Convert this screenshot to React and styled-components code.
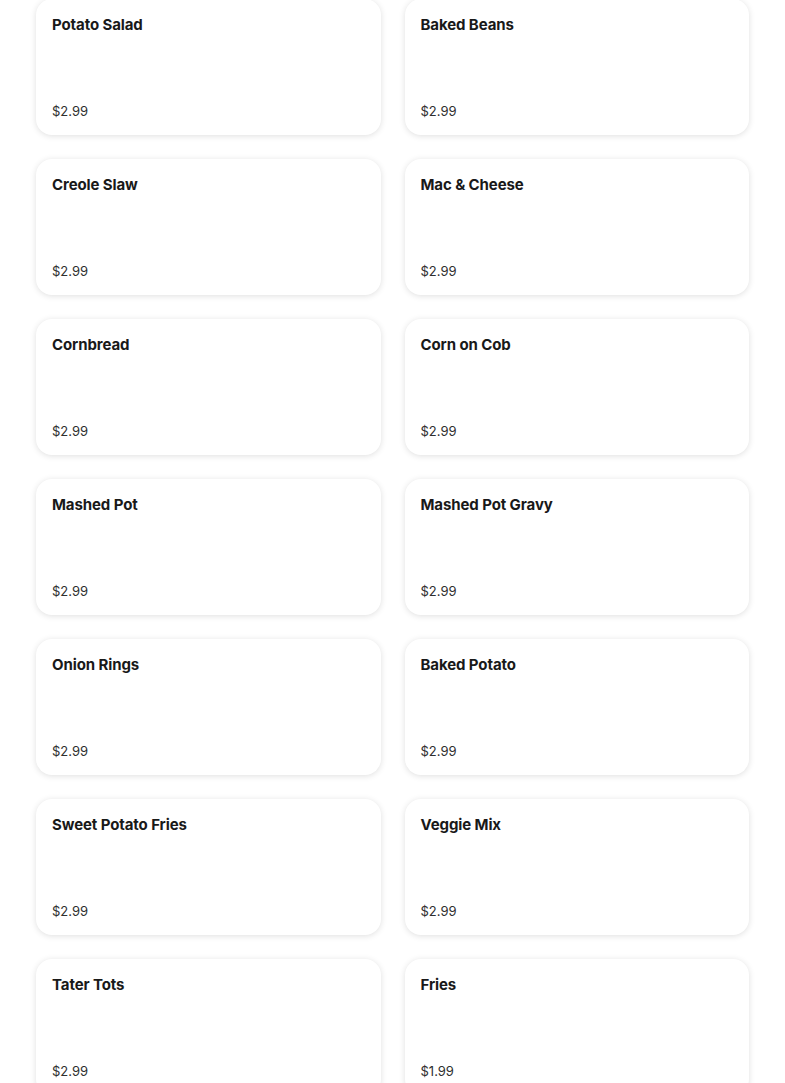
import styled, { createGlobalStyle } from "styled-components";

const GlobalStyle = createGlobalStyle`
    html, body {
        margin: 0;
        padding: 0;
        background: #ffffff;
    }
    body {
        font-family: Inter, "Noto Sans", "Liberation Sans", sans-serif;
        -webkit-font-smoothing: antialiased;
    }
`;

const Page = styled.div`
    padding: 0 36px;
    margin-top: -1px;
`;

const Grid = styled.div`
    display: grid;
    grid-template-columns: 1fr 1fr;
    column-gap: 24px;
    row-gap: 24px;
`;

const Card = styled.div`
    height: 136px;
    box-sizing: border-box;
    padding: 16px 16px 15px;
    background: #ffffff;
    border-radius: 16px;
    box-shadow: 0 1px 6px rgba(0, 0, 0, 0.13);
    display: flex;
    flex-direction: column;
    justify-content: space-between;
`;

const Title = styled.div`
    font-size: 15px;
    font-weight: 700;
    line-height: 20px;
    color: #191919;
    letter-spacing: -0.1px;
`;

const Price = styled.div`
    font-size: 13px;
    line-height: 18px;
    color: #2f2f2f;
`;

const items = [
    ["Potato Salad", "$2.99"],
    ["Baked Beans", "$2.99"],
    ["Creole Slaw", "$2.99"],
    ["Mac & Cheese", "$2.99"],
    ["Cornbread", "$2.99"],
    ["Corn on Cob", "$2.99"],
    ["Mashed Pot", "$2.99"],
    ["Mashed Pot Gravy", "$2.99"],
    ["Onion Rings", "$2.99"],
    ["Baked Potato", "$2.99"],
    ["Sweet Potato Fries", "$2.99"],
    ["Veggie Mix", "$2.99"],
    ["Tater Tots", "$2.99"],
    ["Fries", "$1.99"],
];

export default function App() {
    return (
        <>
            <GlobalStyle />
            <Page>
                <Grid>
                    {items.map(([name, price]) => (
                        <Card key={name}>
                            <Title>{name}</Title>
                            <Price>{price}</Price>
                        </Card>
                    ))}
                </Grid>
            </Page>
        </>
    );
}
